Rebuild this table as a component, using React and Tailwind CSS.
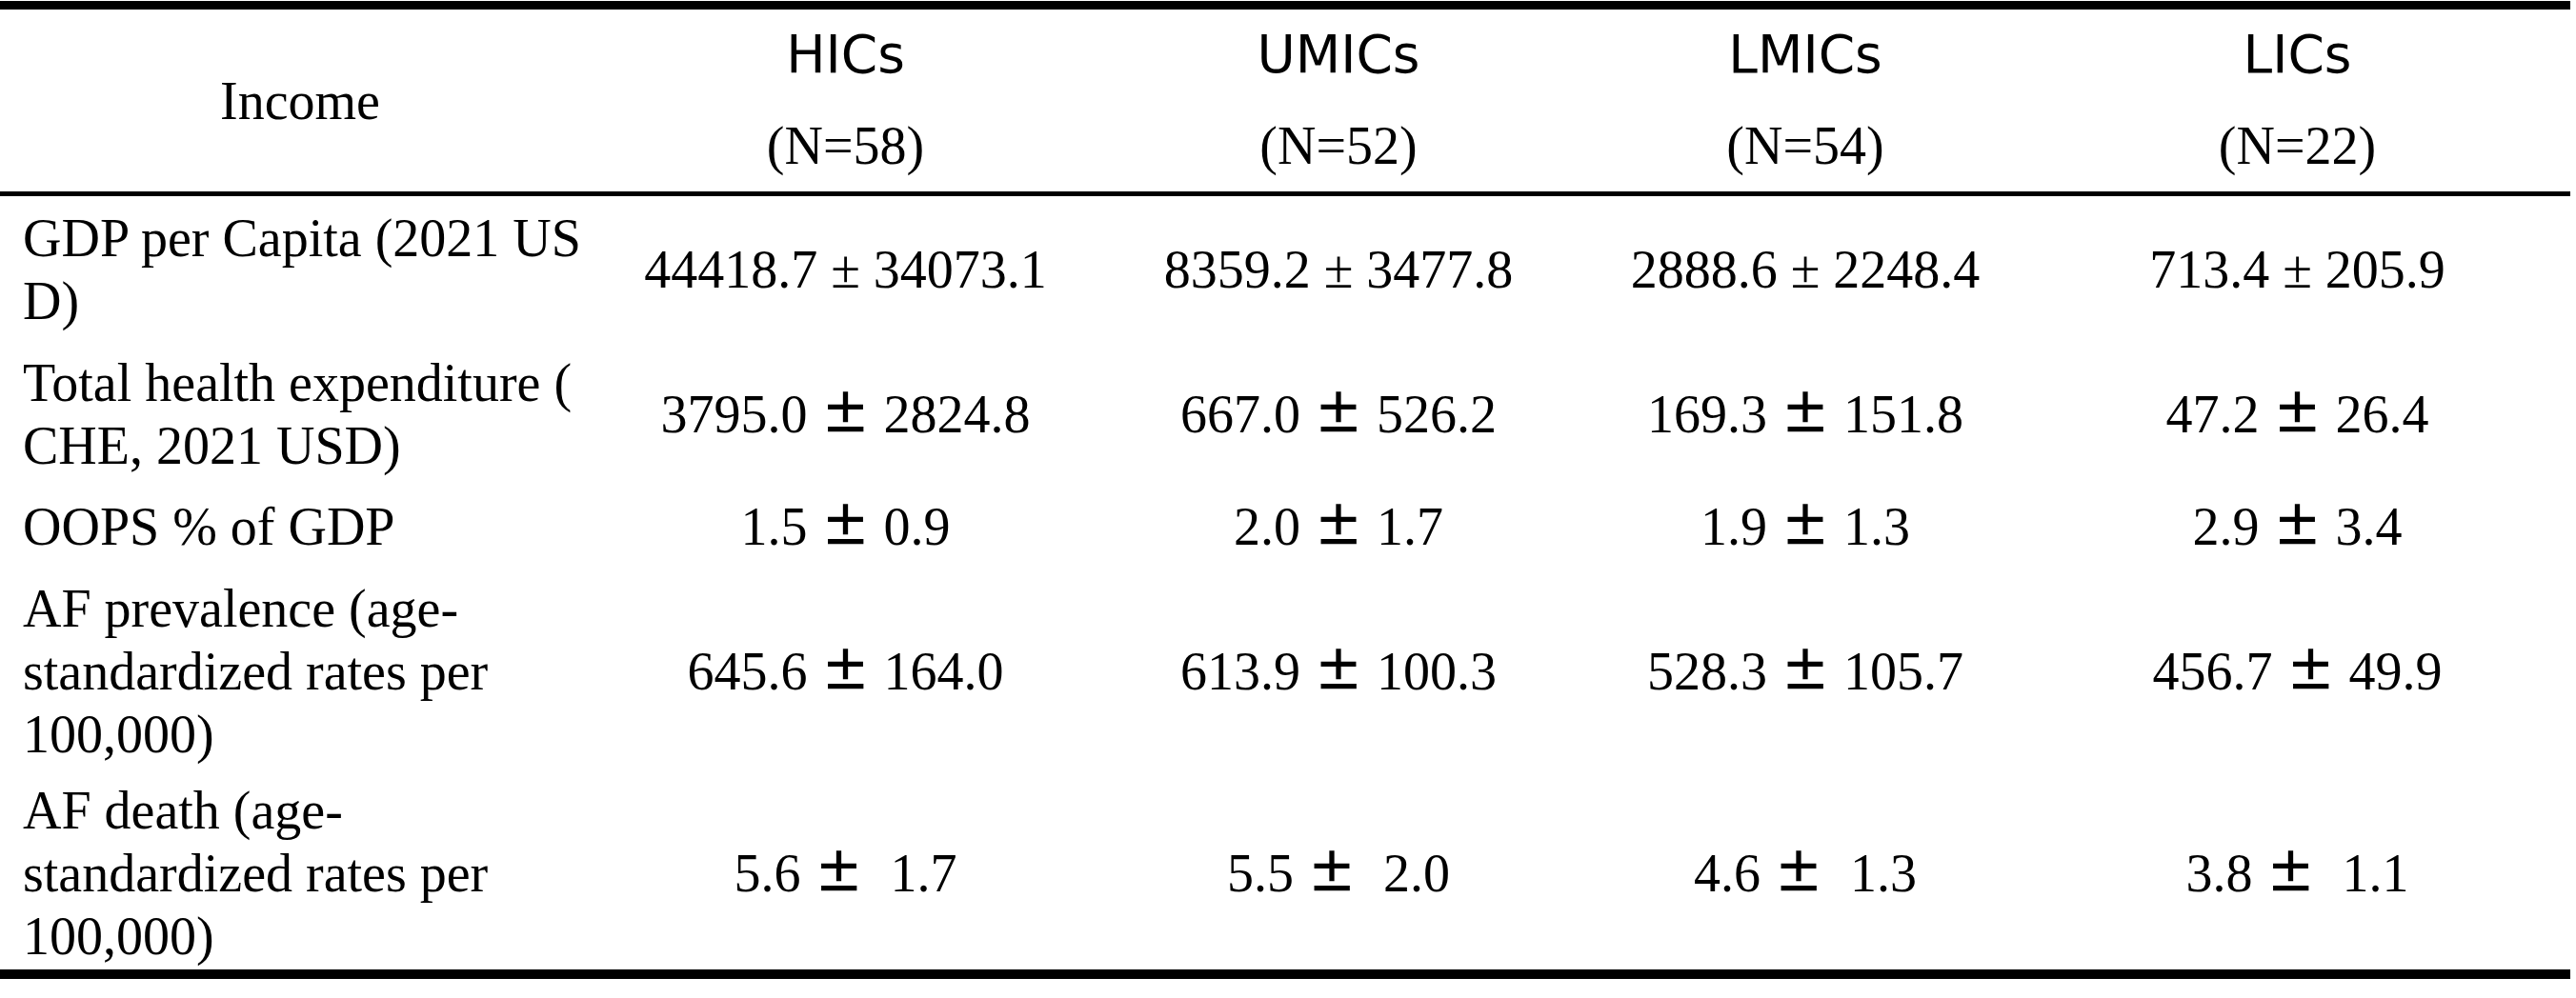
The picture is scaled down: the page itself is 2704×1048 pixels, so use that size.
import React from "react";

const cols = "grid grid-cols-[630px_515px_520px_460px_573px]";

const groups = [
  { name: "HICs", n: "(N=58)" },
  { name: "UMICs", n: "(N=52)" },
  { name: "LMICs", n: "(N=54)" },
  { name: "LICs", n: "(N=22)" },
];

// cjk: the ± in these rows comes from a different (heavier) font
const rows = [
  {
    label: ["GDP per Capita (2021 US", "D)"],
    values: [["44418.7", "34073.1"], ["8359.2", "3477.8"], ["2888.6", "2248.4"], ["713.4", "205.9"]],
    h: "h-[154px]",
    cjk: false,
  },
  {
    label: ["Total health expenditure (", "CHE, 2021 USD)"],
    values: [["3795.0", "2824.8"], ["667.0", "526.2"], ["169.3", "151.8"], ["47.2", "26.4"]],
    h: "h-[150px]",
    cjk: true,
  },
  {
    label: ["OOPS % of GDP"],
    values: [["1.5", "0.9"], ["2.0", "1.7"], ["1.9", "1.3"], ["2.9", "3.4"]],
    h: "h-[85px]",
    cjk: true,
  },
  {
    label: ["AF prevalence (age-", "standardized rates per", "100,000)"],
    values: [["645.6", "164.0"], ["613.9", "100.3"], ["528.3", "105.7"], ["456.7", "49.9"]],
    h: "h-[220px]",
    cjk: true,
  },
  {
    label: ["AF death (age-", "standardized rates per", "100,000)"],
    values: [["5.6", " 1.7"], ["5.5", " 2.0"], ["4.6", " 1.3"], ["3.8", " 1.1"]],
    h: "h-[203px]",
    cjk: true,
  },
];

const App = () => {
  return (
    <div className="w-[2704px] h-[1048px] bg-white overflow-hidden">
      <div className="w-[2698px] pt-px font-['Liberation_Serif','Times_New_Roman',serif] text-[56px] text-black">
        <div className="border-t-[9px] border-black" />

        {/* header */}
        <div className={`${cols} h-[191px]`}>
          <div className="flex items-center justify-center">Income</div>
          {groups.map((g) => (
            <div key={g.name} className="flex flex-col items-center">
              <div className="h-[94px] flex items-center font-['DejaVu_Sans','Liberation_Sans',sans-serif] text-[55px]">
                {g.name}
              </div>
              <div className="flex-1 flex items-center">{g.n}</div>
            </div>
          ))}
        </div>

        <div className="border-t-[5px] border-black" />

        {/* body */}
        {rows.map((r) => (
          <div key={r.label[0]} className={`${cols} ${r.h}`}>
            <div className="flex flex-col justify-center pl-6 leading-[66px]">
              {r.label.map((l) => (
                <span key={l} className="whitespace-nowrap">
                  {l}
                </span>
              ))}
            </div>
            {r.values.map(([m, sd], i) => (
              <div key={i} className="flex items-center justify-center">
                <span className="whitespace-pre">
                  {m + " "}
                  <span className={r.cjk ? "font-['Noto_Sans_CJK_SC',sans-serif] font-semibold text-[52px]" : ""}>±</span>
                  {" " + sd}
                </span>
              </div>
            ))}
          </div>
        ))}

        <div className="border-t-[10px] border-black" />
      </div>
    </div>
  );
};

export default App;
